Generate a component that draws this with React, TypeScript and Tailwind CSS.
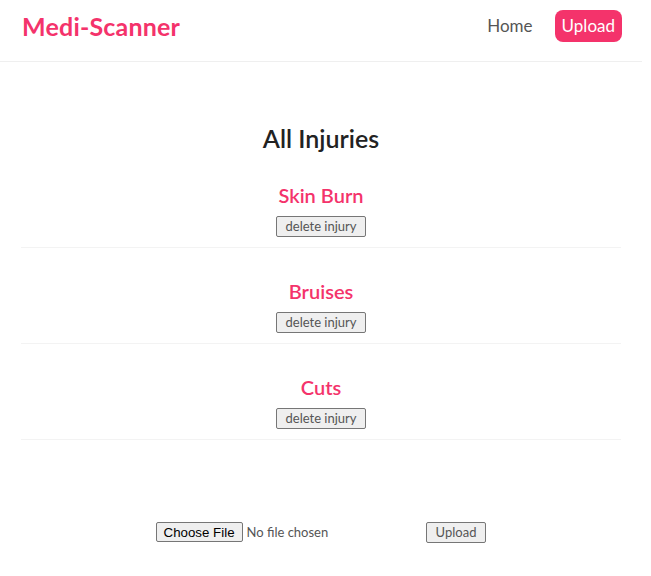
import { useState } from 'react';

const injuries = ['Skin Burn', 'Bruises', 'Cuts'];

const App = () => {
    const [items, setItems] = useState(injuries);

    return (
        <div className="w-[642px] min-h-[576px] bg-white text-[#222] font-['Lato','Open_Sans',sans-serif]">
            <nav className="h-[62px] flex items-start justify-between pt-[10px] pl-[22px] pr-[20px] border-b border-[#efefef]">
                <div className="h-[32px] flex items-center">
                    <h1 className="text-[25px] font-bold text-[#f4336b] tracking-[0.2px] leading-none">Medi-Scanner</h1>
                </div>
                <div className="h-[32px] flex items-center gap-[22px]">
                    <a className="text-[17px] text-[#555]">Home</a>
                    <a className="h-[32px] px-[7px] flex items-center rounded-[8px] bg-[#f4336b] text-white text-[17px]">
                        Upload
                    </a>
                </div>
            </nav>
            <div className="pt-[60px] flex flex-col items-center">
                <h2 className="text-[25px] leading-[32px] font-semibold text-[#222]">All Injuries</h2>
                <div className="w-[600px] mt-[27px]">
                    {items.map((name, i) => (
                        <div
                            key={name}
                            className={
                                i === 0
                                    ? 'flex flex-col items-center pb-[10px] border-b border-[#f3f3f3]'
                                    : 'flex flex-col items-center pt-[29px] pb-[10px] border-b border-[#f3f3f3]'
                            }
                        >
                            <h3 className="text-[20px] leading-[28px] font-semibold text-[#f4336b]">{name}</h3>
                            <button
                                onClick={() => setItems(items.filter((n) => n !== name))}
                                className="mt-[7px] h-[21px] px-[8px] bg-[#efefef] border border-[#767676] rounded-[2px] text-[13px] leading-none text-[#555]"
                            >
                                delete injury
                            </button>
                        </div>
                    ))}
                </div>
                <form className="mt-[82px] flex items-center">
                    <input
                        type="file"
                        className="w-[268px] text-[13px] text-[#555] file:h-[20px] file:px-[7px] file:mr-[4px] file:bg-[#efefef] file:border file:border-[#767676] file:rounded-[2px] file:text-black file:font-['Liberation_Sans',Arial,sans-serif] file:text-[13.3px]"
                    />
                    <button
                        type="button"
                        className="ml-[2px] h-[21px] px-[9px] bg-[#efefef] border border-[#767676] rounded-[2px] text-[13px] leading-none text-[#555]"
                    >
                        Upload
                    </button>
                </form>
            </div>
        </div>
    );
};

export default App;
